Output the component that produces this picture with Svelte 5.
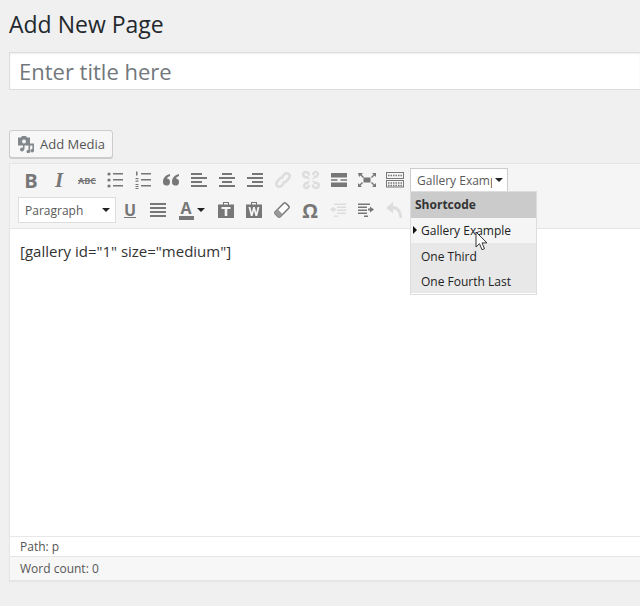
<script>
  const shortcodes = ["Gallery Example", "One Third", "One Fourth Last"];
</script>

{#snippet lines(rows, color = "#777")}
  <svg class="icon" viewBox="0 0 20 20">
    {#each rows as r}
      <rect x={r[0]} y={r[1]} width={r[2]} height={r[3] ?? 2} fill={color} />
    {/each}
  </svg>
{/snippet}

<div class="wrap">
  <h1>Add New Page</h1>
  <input class="title" placeholder="Enter title here" />

  <button class="media">
    <svg class="media-icon" viewBox="0 0 18 18">
      <path fill="#82878c" d="M1 2.500h3l1-1.500h4l1 1.500h3v8H1z" />
      <circle cx="7" cy="6.500" r="2" fill="#f7f7f7" />
      <path fill="#82878c" d="M11.500 8.500H17v7.200a1.800 1.800 0 1 1-1.600-1.800V10.500h-2.300v6a1.800 1.800 0 1 1-1.600-1.800z" />
      <circle cx="5" cy="14.500" r="2" fill="#82878c" />
      <rect x="6" y="10" width="1.500" height="4.500" fill="#82878c" />
    </svg>
    <span>Add Media</span>
  </button>

  <div class="editor">
    <div class="toolbar">
      <div class="row">
        <span class="btn glyph bold">B</span>
        <span class="btn glyph italic">I</span>
        <span class="btn glyph abc">ABC</span>
        <span class="btn">
          <svg class="icon" viewBox="0 0 20 20">
            <g fill="#777">
              <circle cx="4" cy="4" r="1.600" /><circle cx="4" cy="10" r="1.600" /><circle cx="4" cy="16" r="1.600" />
              <rect x="8" y="3" width="10" height="1.500" /><rect x="8" y="9" width="10" height="1.500" /><rect x="8" y="15" width="10" height="1.500" />
            </g>
          </svg>
        </span>
        <span class="btn">
          <svg class="icon" viewBox="0 0 20 20">
            <g fill="#777">
              <rect x="3" y="1.500" width="1.500" height="4" /><rect x="2.500" y="8" width="3" height="1.200" /><rect x="2.500" y="10.500" width="3" height="1.200" />
              <rect x="2.500" y="14" width="3" height="1" /><rect x="2.500" y="16" width="3" height="1" /><rect x="2.500" y="18" width="3" height="1" />
              <rect x="8" y="3" width="10" height="1.500" /><rect x="8" y="9" width="10" height="1.500" /><rect x="8" y="15" width="10" height="1.500" />
            </g>
          </svg>
        </span>
        <span class="btn">
          <svg class="icon" viewBox="0 0 20 20">
            <path fill="#777" d="M9 4C5 5 2 7.500 2 12a3.500 3.500 0 1 0 4-3.400C6.300 7.500 7.500 6.500 9 6zM18 4c-4 1-7 3.500-7 8a3.500 3.500 0 1 0 4-3.400c.3-1.100 1.500-2.100 3-2.600z" />
          </svg>
        </span>
        <span class="btn">{@render lines([[2, 3, 11], [2, 7, 16], [2, 11, 11], [2, 15, 16]])}</span>
        <span class="btn">{@render lines([[5, 3, 10], [2, 7, 16], [5, 11, 10], [2, 15, 16]])}</span>
        <span class="btn">{@render lines([[7, 3, 11], [2, 7, 16], [7, 11, 11], [2, 15, 16]])}</span>
        <span class="btn">
          <svg class="icon" viewBox="0 0 20 20">
            <g fill="none" stroke="#ddd" stroke-width="2.600">
              <path d="M9.500 6.500l2-2.300a3 3 0 0 1 4.500 4l-3 3.300a3 3 0 0 1-3.500.5" />
              <path d="M10.500 13.500l-2 2.300a3 3 0 0 1-4.500-4l3-3.300a3 3 0 0 1 3.500-.5" />
            </g>
          </svg>
        </span>
        <span class="btn">
          <svg class="icon" viewBox="0 0 20 20">
            <g fill="none" stroke="#ddd" stroke-width="2.400">
              <path d="M7.500 7.500L4.500 7a2.500 2.500 0 0 1 .5-5c2 0 3 1.500 3 3.500" />
              <path d="M12.500 7l3-.5a2.500 2.500 0 0 0 0-4.500c-2-.5-3.500 1-3.500 3" />
              <path d="M7.500 13l-3 .5a2.500 2.500 0 0 0 0 4.500c2 .5 3.500-1 3.500-3" />
              <path d="M12.500 12.500l3 .5a2.500 2.500 0 0 1-.5 5c-2 0-3-1.500-3-3.500" />
              <path d="M9 9L6 8M11 9l3-1M9 11l-3 1M11 11l3 1" stroke-width="1.200" />
            </g>
          </svg>
        </span>
        <span class="btn">
          <svg class="icon" viewBox="0 0 20 20">
            <rect x="2" y="3" width="16" height="4.500" fill="#777" />
            <rect x="2" y="12.500" width="16" height="4.500" fill="#777" />
            <path stroke="#777" stroke-width="1.500" d="M2 10h6.500M11.500 10H18" />
          </svg>
        </span>
        <span class="btn">
          <svg class="icon" viewBox="0 0 20 20">
            <path fill="#777" d="M1 3h5L4.500 4.500 7 7 6 8 3.500 5.500 2 7zM19 3v4l-1.500-1.500L15 8l-1-1 2.500-2.500L15 3zM1 17v-4l1.500 1.500L5 12l1 1-2.500 2.500L5 17zM19 17h-4l1.500-1.500L14 13l1-1 2.500 2.500L19 13z" />
            <rect x="6.500" y="7.500" width="7" height="5" fill="#777" />
          </svg>
        </span>
        <span class="btn">
          <svg class="icon" viewBox="0 0 20 20">
            <g fill="none" stroke="#777" stroke-width="1">
              <rect x="1.500" y="2.500" width="17" height="6" />
              <rect x="1.500" y="10.500" width="17" height="6.500" />
            </g>
            <path stroke="#777" stroke-width="1.500" stroke-dasharray="1.500 1" d="M3 5.500h14M3 13h14M3 15.500h14" />
          </svg>
        </span>
        <span class="listbox">
          <span class="listbox-text">Gallery Example</span>
          <span class="arrow"></span>
        </span>
      </div>
      <div class="row second">
        <span class="select">
          <span>Paragraph</span>
          <span class="arrow"></span>
        </span>
        <span class="btn glyph under">U</span>
        <span class="btn">{@render lines([[2, 3, 16], [2, 7, 16], [2, 11, 16], [2, 15, 16]])}</span>
        <span class="color">
          <span class="glyph letter">A</span>
          <span class="swatch"></span>
        </span>
        <span class="arrow side"></span>
        <span class="btn">
          <svg class="icon" viewBox="0 0 20 20">
            <path fill="#777" d="M2 4.500h5V2h6v2.500h5V18H2z" />
            <rect x="8" y="3" width="4" height="1.500" fill="#f5f5f5" />
            <path fill="#f5f5f5" d="M5.500 7h9v2h-3.200v7H8.700V9H5.500z" />
          </svg>
        </span>
        <span class="btn">
          <svg class="icon" viewBox="0 0 20 20">
            <path fill="#777" d="M2 4.500h5V2h6v2.500h5V18H2z" />
            <rect x="8" y="3" width="4" height="1.500" fill="#f5f5f5" />
            <path fill="#f5f5f5" d="M4.500 7h2l1.200 5.500L9.200 7h1.600l1.500 5.500L13.500 7h2l-2.300 9h-1.800L10 10.500 8.600 16H6.800z" />
          </svg>
        </span>
        <span class="btn">
          <svg class="icon" viewBox="0 0 20 20">
            <g transform="rotate(-45 10 10)">
              <rect x="2.500" y="6.500" width="15" height="7" rx="1.500" fill="#fff" stroke="#777" stroke-width="1.500" />
              <path fill="#999" d="M4 6.500h3.500v7H4a1.500 1.500 0 0 1-1.500-1.500V8A1.500 1.500 0 0 1 4 6.500z" />
            </g>
          </svg>
        </span>
        <span class="btn glyph omega">Ω</span>
        <span class="btn">
          <svg class="icon" viewBox="0 0 20 20">
            <g fill="#ddd">
              <rect x="6" y="3.500" width="12" height="1.500" /><rect x="9" y="6.500" width="9" height="1.500" /><rect x="9" y="9.500" width="9" height="1.500" /><rect x="9" y="12.500" width="9" height="1.500" /><rect x="6" y="15.500" width="4" height="1.500" />
              <path d="M2 9.500L6 6.500v2h2v2H6v2z" />
            </g>
          </svg>
        </span>
        <span class="btn">
          <svg class="icon" viewBox="0 0 20 20">
            <g fill="#777">
              <rect x="2" y="3.500" width="12" height="1.500" /><rect x="2" y="6.500" width="9" height="1.500" /><rect x="2" y="9.500" width="9" height="1.500" /><rect x="2" y="12.500" width="9" height="1.500" /><rect x="8" y="15.500" width="4" height="1.500" />
              <path d="M18 9.500L14 6.500v2h-2v2h2v2z" />
            </g>
          </svg>
        </span>
        <span class="btn">
          <svg class="icon" viewBox="0 0 20 20">
            <path fill="#ddd" d="M9 2L2 8l7 5.500V9.500c4 0 6 2.500 6.500 8.500H18c0-8-4-12-9-12z" />
          </svg>
        </span>
      </div>
    </div>

    <div class="content">[gallery id="1" size="medium"]</div>
    <div class="path">Path: p</div>
    <div class="count">Word count: 0</div>

    <div class="menu">
      <div class="menu-head">Shortcode</div>
      {#each shortcodes as s, i}
        <div class="menu-item" class:active={i === 0}>{s}</div>
      {/each}
    </div>

    <svg class="cursor" viewBox="0 0 14 21">
      <path fill="#fff" stroke="#333" stroke-width="1" d="M1 1v15l3.500-3.300 2.500 6 2.500-1-2.500-5.800h5z" />
    </svg>
  </div>
</div>

<style>
  :global(body) {
    background: #f0f0f0;
    font-family: "Open Sans", sans-serif;
    overflow: hidden;
  }

  .wrap {
    padding: 0 0 0 9px;
    width: 640px;
    height: 606px;
    box-sizing: border-box;
  }

  h1 {
    margin: 0;
    padding-top: 9px;
    font-size: 23px;
    line-height: 31px;
    font-weight: 400;
    color: #23282d;
  }

  .title {
    display: block;
    margin-top: 12px;
    width: 100%;
    height: 38px;
    box-sizing: border-box;
    border: 1px solid #ddd;
    border-right: 0;
    padding: 0 9px;
    font-family: inherit;
    font-size: 22px;
    background: #fff;
    outline: none;
    box-shadow: inset 0 1px 2px rgba(0, 0, 0, 0.07);
  }

  .title::placeholder {
    color: #72777c;
  }

  .media {
    display: flex;
    align-items: center;
    gap: 5px;
    margin-top: 40px;
    width: 104px;
    height: 28px;
    box-sizing: border-box;
    padding: 0 7px;
    background: #f7f7f7;
    border: 1px solid #ccc;
    border-radius: 3px;
    box-shadow: 0 1px 0 #ccc;
    color: #555;
    font-family: inherit;
    font-size: 13px;
    white-space: nowrap;
  }

  .media-icon {
    flex: none;
    width: 18px;
    height: 18px;
  }

  .editor {
    position: relative;
    margin-top: 5px;
    width: 100%;
    box-sizing: border-box;
    border: 1px solid #e5e5e5;
    border-right: 0;
    background: #fff;
    box-shadow: 0 1px 1px rgba(0, 0, 0, 0.04);
  }

  .toolbar {
    height: 65px;
    box-sizing: border-box;
    padding: 2px 0 0 7px;
    background: #f5f5f5;
    border-bottom: 1px solid #e5e5e5;
  }

  .row {
    display: flex;
    align-items: center;
    height: 28px;
  }

  .second {
    margin-top: 2px;
    margin-left: 1px;
  }

  .btn {
    display: flex;
    align-items: center;
    justify-content: center;
    flex: none;
    width: 28px;
    height: 28px;
  }

  .icon {
    width: 20px;
    height: 20px;
  }

  .glyph {
    color: #777;
    font-family: "Open Sans", sans-serif;
  }

  .bold {
    font-size: 20px;
    font-weight: 700;
  }

  .italic {
    font-family: "Liberation Serif", serif;
    font-style: italic;
    font-weight: 700;
    font-size: 21px;
  }

  .abc {
    font-size: 9px;
    font-weight: 700;
    text-decoration: line-through;
  }

  .under {
    font-size: 16px;
    font-weight: 700;
    text-decoration: underline;
  }

  .omega {
    font-size: 20px;
    font-weight: 700;
  }

  .listbox {
    display: flex;
    align-items: center;
    justify-content: space-between;
    flex: none;
    width: 98px;
    height: 25px;
    margin-left: 1px;
    box-sizing: border-box;
    padding: 0 4px 0 6px;
    background: #fff;
    border: 1px solid #ccc;
    font-size: 12px;
    color: #595959;
  }

  .select {
    display: flex;
    align-items: center;
    justify-content: space-between;
    flex: none;
    width: 98px;
    height: 26px;
    box-sizing: border-box;
    padding: 0 5px 0 6px;
    background: #fff;
    border: 1px solid #ddd;
    font-size: 12px;
    color: #595959;
  }

  .listbox-text {
    width: 75px;
    overflow: hidden;
    white-space: nowrap;
  }

  .arrow {
    flex: none;
    width: 0;
    height: 0;
    border: 4px solid transparent;
    border-top-color: #222;
    border-bottom: 0;
  }

  .side {
    margin: 0 7px 0 -3px;
  }

  .color {
    display: flex;
    flex-direction: column;
    align-items: center;
    flex: none;
    width: 28px;
  }

  .letter {
    font-size: 16px;
    font-weight: 700;
    line-height: 15px;
  }

  .swatch {
    width: 15px;
    height: 4px;
    background: #777;
  }

  .content {
    height: 307px;
    box-sizing: border-box;
    padding: 12px 10px;
    font-size: 15px;
    line-height: 21px;
    color: #333;
  }

  .path {
    height: 21px;
    box-sizing: border-box;
    padding: 0 10px;
    border-top: 1px solid #e8e8e8;
    border-bottom: 1px solid #e5e5e5;
    font-size: 12px;
    line-height: 20px;
    color: #555;
  }

  .count {
    height: 23px;
    box-sizing: border-box;
    padding: 0 10px;
    background: #f7f7f7;
    font-size: 12px;
    line-height: 23px;
    color: #555;
  }

  .menu {
    position: absolute;
    left: 400px;
    top: 27px;
    width: 125px;
    background: #e8e8e8;
    border: 1px solid #ddd;
    font-size: 12px;
    box-shadow: inset 0 -1px 0 #fff;
    padding-bottom: 1px;
  }

  .menu-head {
    height: 26px;
    box-sizing: border-box;
    padding-left: 4px;
    background: #cbcbcb;
    font-weight: 700;
    line-height: 25px;
    color: #333;
  }

  .menu-item {
    position: relative;
    height: 25px;
    padding-left: 10px;
    line-height: 27px;
    color: #222;
  }

  .active {
    background: #f5f5f5;
    line-height: 25px;
  }

  .active::before {
    content: "";
    position: absolute;
    left: 2px;
    top: 8px;
    border: 4px solid transparent;
    border-left-color: #111;
    border-right: 0;
  }

  .cursor {
    position: absolute;
    left: 465px;
    top: 67px;
    width: 14px;
    height: 21px;
  }
</style>
